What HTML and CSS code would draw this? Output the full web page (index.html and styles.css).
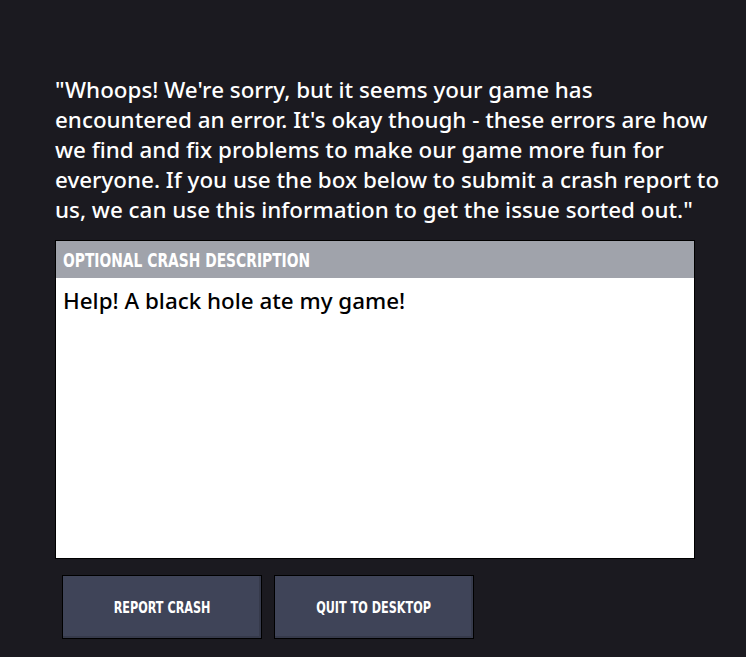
FILE: index.html
```html
<!DOCTYPE html>
<html>
<head>
<meta charset="utf-8">
<link rel="stylesheet" href="styles.css">
</head>
<body>
<main class="crash">
  <p class="message">"Whoops! We're sorry, but it seems your game has encountered an error. It's okay though - these errors are how we find and fix problems to make our game more fun for everyone. If you use the box below to submit a crash report to us, we can use this information to get the issue sorted out."</p>
  <section class="panel">
    <header class="panel-head"><span class="pix pix-head">Optional Crash Description</span></header>
    <div class="panel-body">Help! A black hole ate my game!</div>
  </section>
  <div class="actions">
    <button class="btn"><span class="pix pix-btn">Report Crash</span></button>
    <button class="btn"><span class="pix pix-btn">Quit to Desktop</span></button>
  </div>
</main>
</body>
</html>
```
FILE: styles.css
```css
html, body {
  margin: 0;
  padding: 0;
  background: #1b1a20;
  height: 100%;
}
.crash {
  padding: 75px 0 0 55px;
  display: flex;
  flex-direction: column;
}
.message {
  margin: 0;
  width: 672px;
  color: #ffffff;
  font-family: "Noto Sans", "Open Sans", sans-serif;
  font-size: 22.4px;
  font-weight: 500;
  line-height: 30px;
}
.pix {
  display: inline-block;
  font-family: "DejaVu Sans Condensed", "DejaVu Sans", sans-serif;
  font-weight: bold;
  text-transform: uppercase;
  color: #fff;
  white-space: nowrap;
}
.pix-head {
  font-size: 19px;
  transform: scaleX(0.81);
  transform-origin: left center;
}
.pix-btn {
  font-size: 16px;
  transform: scaleX(0.78);
  transform-origin: center center;
}
.panel {
  margin-top: 15px;
  width: 638px;
  border: 1px solid #000;
  height: 317px;
  display: flex;
  flex-direction: column;
  background: #fff;
}
.panel-head {
  background: #a0a3ab;
  height: 37px;
  display: flex;
  align-items: center;
  padding-left: 7px;
}
.panel-body {
  padding: 8px 7px;
  color: #000;
  font-family: "Noto Sans", "Open Sans", sans-serif;
  font-size: 22.4px;
  font-weight: 500;
  line-height: 30px;
}
.actions {
  display: flex;
  gap: 12px;
  margin-top: 16px;
  padding-left: 7px;
}
.btn {
  width: 200px;
  height: 64px;
  border: 1px solid #000;
  background: #3f4458;
  box-shadow: inset -2px -2px 0 #363a4b;
  padding: 0;
  display: flex;
  align-items: center;
  justify-content: center;
}
```
